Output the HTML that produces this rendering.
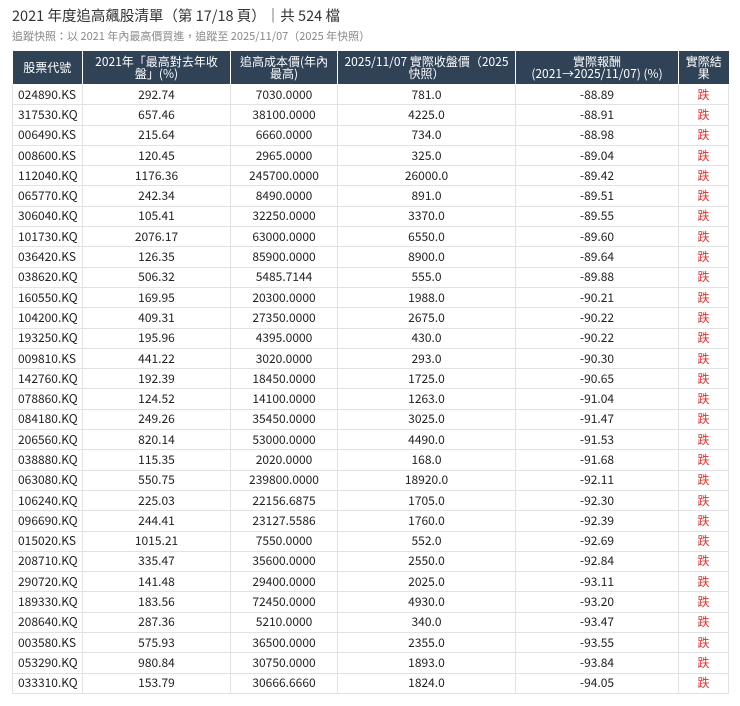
<!DOCTYPE html>
<html><head><meta charset="utf-8"><style>
body{margin:0;background:#fff;font-family:"Noto Sans CJK TC","Liberation Sans",sans-serif;color:#222;}
.t{position:absolute;left:12px;top:6px;font-size:14.5px;color:#333;line-height:20px;}
.s{position:absolute;left:12px;top:28px;font-size:11px;color:#888;line-height:16px;}
table{position:absolute;left:12px;top:51px;border-collapse:collapse;width:716px;table-layout:fixed;font-size:12px;}
th{background:#2f4256;color:#fff;font-weight:normal;height:33px;line-height:12px;padding:0 3px;border:1px solid #fff;border-top:none;font-size:12px;}
th:first-child{border-left:none}th:last-child{border-right:none}
td{height:19.3px;line-height:14px;padding:0;text-align:center;border:1px solid #e2e2e2;}
td:first-child{text-align:left;padding-left:5px;}
td.r{color:#d33;}
</style></head><body>
<div class="t">2021 年度追高飆股清單（第 17/18 頁）｜共 524 檔</div>
<div class="s">追蹤快照：以 2021 年內最高價買進，追蹤至 2025/11/07（2025 年快照）</div>
<table>
<colgroup><col style="width:70px"><col style="width:148px"><col style="width:107px"><col style="width:178px"><col style="width:163px"><col style="width:50px"></colgroup>
<tr><th>股票代號</th><th>2021年「最高對去年收<br>盤」(%)</th><th>追高成本價(年內<br>最高)</th><th>2025/11/07 實際收盤價（2025<br>快照）</th><th>實際報酬<br>(2021→2025/11/07) (%)</th><th>實際結<br>果</th></tr>
<tr><td>024890.KS</td><td>292.74</td><td>7030.0000</td><td>781.0</td><td>-88.89</td><td class="r">跌</td></tr>
<tr><td>317530.KQ</td><td>657.46</td><td>38100.0000</td><td>4225.0</td><td>-88.91</td><td class="r">跌</td></tr>
<tr><td>006490.KS</td><td>215.64</td><td>6660.0000</td><td>734.0</td><td>-88.98</td><td class="r">跌</td></tr>
<tr><td>008600.KS</td><td>120.45</td><td>2965.0000</td><td>325.0</td><td>-89.04</td><td class="r">跌</td></tr>
<tr><td>112040.KQ</td><td>1176.36</td><td>245700.0000</td><td>26000.0</td><td>-89.42</td><td class="r">跌</td></tr>
<tr><td>065770.KQ</td><td>242.34</td><td>8490.0000</td><td>891.0</td><td>-89.51</td><td class="r">跌</td></tr>
<tr><td>306040.KQ</td><td>105.41</td><td>32250.0000</td><td>3370.0</td><td>-89.55</td><td class="r">跌</td></tr>
<tr><td>101730.KQ</td><td>2076.17</td><td>63000.0000</td><td>6550.0</td><td>-89.60</td><td class="r">跌</td></tr>
<tr><td>036420.KS</td><td>126.35</td><td>85900.0000</td><td>8900.0</td><td>-89.64</td><td class="r">跌</td></tr>
<tr><td>038620.KQ</td><td>506.32</td><td>5485.7144</td><td>555.0</td><td>-89.88</td><td class="r">跌</td></tr>
<tr><td>160550.KQ</td><td>169.95</td><td>20300.0000</td><td>1988.0</td><td>-90.21</td><td class="r">跌</td></tr>
<tr><td>104200.KQ</td><td>409.31</td><td>27350.0000</td><td>2675.0</td><td>-90.22</td><td class="r">跌</td></tr>
<tr><td>193250.KQ</td><td>195.96</td><td>4395.0000</td><td>430.0</td><td>-90.22</td><td class="r">跌</td></tr>
<tr><td>009810.KS</td><td>441.22</td><td>3020.0000</td><td>293.0</td><td>-90.30</td><td class="r">跌</td></tr>
<tr><td>142760.KQ</td><td>192.39</td><td>18450.0000</td><td>1725.0</td><td>-90.65</td><td class="r">跌</td></tr>
<tr><td>078860.KQ</td><td>124.52</td><td>14100.0000</td><td>1263.0</td><td>-91.04</td><td class="r">跌</td></tr>
<tr><td>084180.KQ</td><td>249.26</td><td>35450.0000</td><td>3025.0</td><td>-91.47</td><td class="r">跌</td></tr>
<tr><td>206560.KQ</td><td>820.14</td><td>53000.0000</td><td>4490.0</td><td>-91.53</td><td class="r">跌</td></tr>
<tr><td>038880.KQ</td><td>115.35</td><td>2020.0000</td><td>168.0</td><td>-91.68</td><td class="r">跌</td></tr>
<tr><td>063080.KQ</td><td>550.75</td><td>239800.0000</td><td>18920.0</td><td>-92.11</td><td class="r">跌</td></tr>
<tr><td>106240.KQ</td><td>225.03</td><td>22156.6875</td><td>1705.0</td><td>-92.30</td><td class="r">跌</td></tr>
<tr><td>096690.KQ</td><td>244.41</td><td>23127.5586</td><td>1760.0</td><td>-92.39</td><td class="r">跌</td></tr>
<tr><td>015020.KS</td><td>1015.21</td><td>7550.0000</td><td>552.0</td><td>-92.69</td><td class="r">跌</td></tr>
<tr><td>208710.KQ</td><td>335.47</td><td>35600.0000</td><td>2550.0</td><td>-92.84</td><td class="r">跌</td></tr>
<tr><td>290720.KQ</td><td>141.48</td><td>29400.0000</td><td>2025.0</td><td>-93.11</td><td class="r">跌</td></tr>
<tr><td>189330.KQ</td><td>183.56</td><td>72450.0000</td><td>4930.0</td><td>-93.20</td><td class="r">跌</td></tr>
<tr><td>208640.KQ</td><td>287.36</td><td>5210.0000</td><td>340.0</td><td>-93.47</td><td class="r">跌</td></tr>
<tr><td>003580.KS</td><td>575.93</td><td>36500.0000</td><td>2355.0</td><td>-93.55</td><td class="r">跌</td></tr>
<tr><td>053290.KQ</td><td>980.84</td><td>30750.0000</td><td>1893.0</td><td>-93.84</td><td class="r">跌</td></tr>
<tr><td>033310.KQ</td><td>153.79</td><td>30666.6660</td><td>1824.0</td><td>-94.05</td><td class="r">跌</td></tr>
</table>
</body></html>
